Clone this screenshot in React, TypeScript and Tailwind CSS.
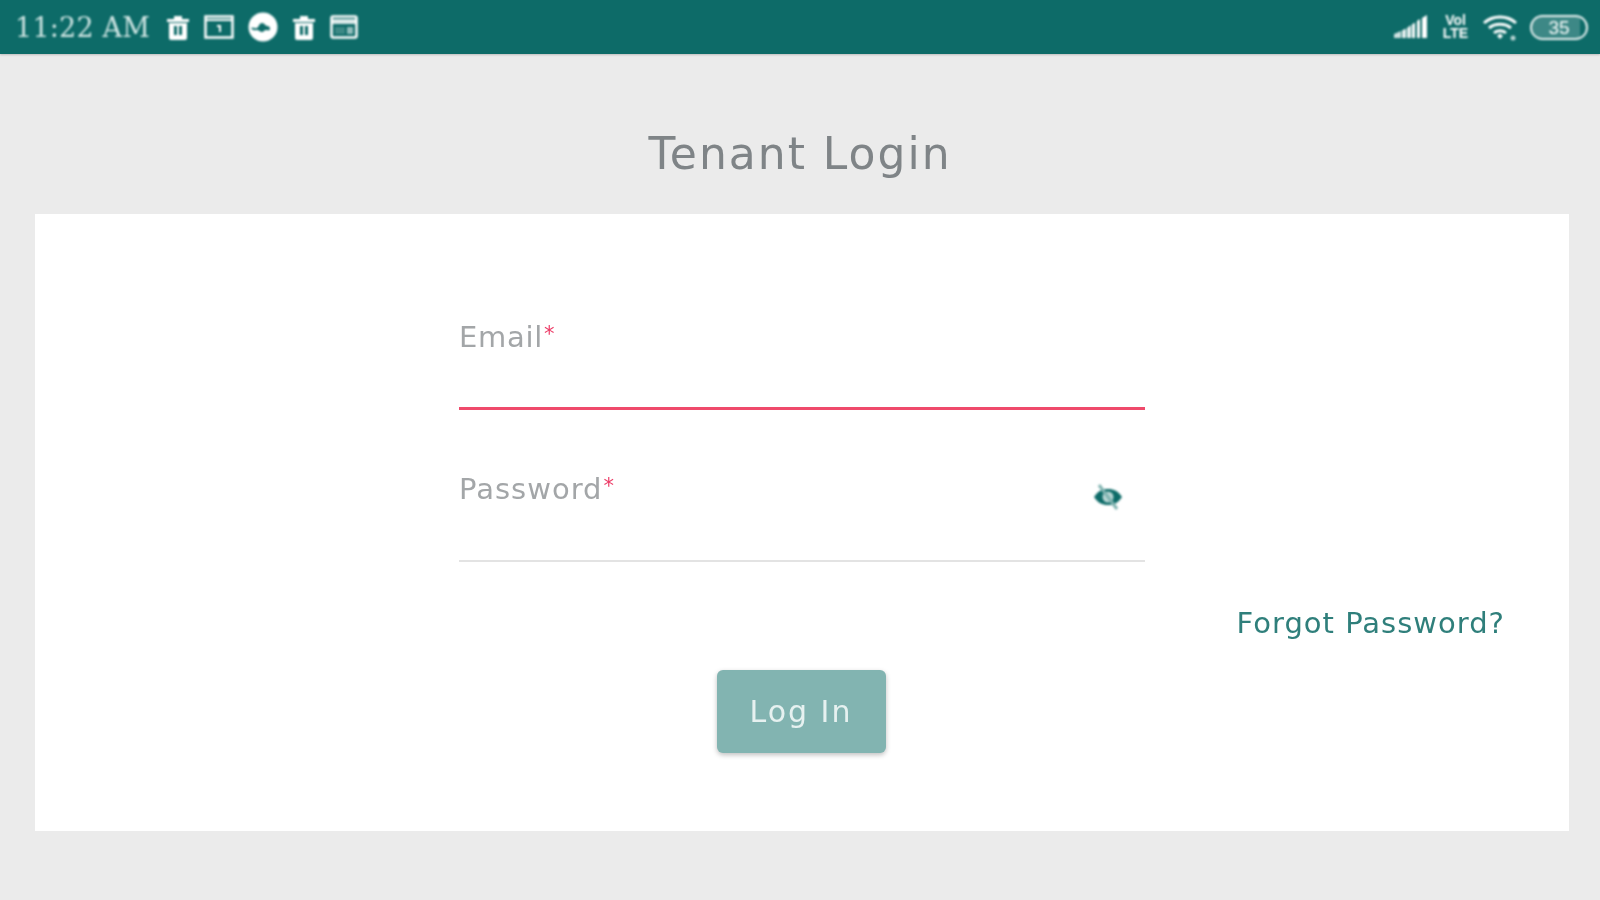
const sans = "font-['DejaVu_Sans','Inter',sans-serif]";

function TrashIcon() {
  return (
    <svg width="24" height="26" viewBox="0 0 24 26" fill="white">
      <path d="M1 5h22v3H1zM8 2h8v3H8z" />
      <path fillRule="evenodd" d="M3 9h18v15a2 2 0 0 1-2 2H5a2 2 0 0 1-2-2zM8 12v9h3v-9zM13 12v9h3v-9z" />
    </svg>
  );
}

function CalendarIcon() {
  return (
    <svg width="30" height="26" viewBox="0 0 30 26" fill="none">
      <rect x="1.5" y="2.5" width="27" height="21" stroke="white" strokeWidth="2.5" />
      <path d="M1.5 6h27" stroke="white" strokeWidth="2" />
      <path d="M13 11h4v7h-2v-5h-2z" fill="white" />
    </svg>
  );
}

function KeyIcon() {
  return (
    <svg width="30" height="30" viewBox="0 0 30 30">
      <circle cx="15" cy="15" r="14.5" fill="white" />
      <path d="M3 16c3-1 4 1 6 0s2-5 5-5 3 3 5 3 3 1 3 3-2 1-4 1-2 2-4 2-3-2-5-2-4 1-6-2z" fill="#0d6b68" />
    </svg>
  );
}

function WindowIcon() {
  return (
    <svg width="28" height="26" viewBox="0 0 28 26">
      <rect x="1.5" y="2.5" width="25" height="21" rx="1.5" fill="none" stroke="white" strokeWidth="2.5" />
      <path d="M1.5 5h25v5h-25z" fill="white" fillOpacity="0.85" />
      <path d="M5 13h10v7H5z" fill="#3c8885" />
      <path d="M17 13h6v7h-6z" fill="white" fillOpacity="0.55" />
    </svg>
  );
}

function SignalIcon() {
  return (
    <svg width="36" height="26" viewBox="0 0 36 26" fill="white">
      <path d="M1 20l7-3v7H1z" fillOpacity="0.8" />
      <path d="M9 16.500l4-2V24H9zM14 14l4-3v13h-4z" fillOpacity="0.9" />
      <path d="M19 10.500l3-2V24h-3zM24 7l3-2v19h-3zM29 4l5-3v23h-5z" />
    </svg>
  );
}

function VolteIcon() {
  return (
    <div className="flex w-[29px] flex-col items-center font-['Liberation_Sans',sans-serif] text-[14px] font-bold leading-[13px] text-white">
      <span>Vol</span>
      <span>LTE</span>
    </div>
  );
}

function WifiIcon() {
  return (
    <svg width="36" height="28" viewBox="0 0 36 28" fill="none" stroke="white" strokeWidth="3">
      <path d="M2 10c9-8 23-8 32 0M7 15c6-5 16-5 22 0M12 20c3-3 9-3 12 0" />
      <path d="M15 23l3-2.500 3 2.500-3 3z" fill="white" stroke="none" />
      <circle cx="31" cy="25" r="2.500" fill="white" fillOpacity="0.7" stroke="none" />
    </svg>
  );
}

function Battery() {
  return (
    <div className="flex h-[25px] w-[58px] items-center overflow-hidden rounded-full border-2 border-white/90 font-['Liberation_Sans',sans-serif] text-[19px] leading-none text-white">
      <div className="flex h-full w-[48px] items-center justify-center rounded-l-full bg-white/20 pl-[6px]">35</div>
    </div>
  );
}

function StatusBar() {
  return (
    <div className="flex h-[54px] items-center justify-between bg-[#0d6b68] pl-[15px] pr-[12px] shadow-[0_1px_2px_rgba(0,0,0,0.2)]">
      <div className="flex items-center blur-[0.9px]">
        <span className="mr-[15px] w-[136px] font-['DejaVu_Serif',serif] text-[27px] leading-none tracking-[0.2px] whitespace-nowrap text-[#cfe5e3]">
          11:22 AM
        </span>
        <div className="flex items-center gap-[14px]">
          <TrashIcon />
          <CalendarIcon />
          <KeyIcon />
          <TrashIcon />
          <WindowIcon />
        </div>
      </div>
      <div className="flex items-center gap-[12px] blur-[0.9px]">
        <SignalIcon />
        <VolteIcon />
        <WifiIcon />
        <Battery />
      </div>
    </div>
  );
}

function EyeOffIcon() {
  return (
    <svg width="30" height="26" viewBox="0 0 30 26" fill="none" className="absolute right-[22px] top-[14px] blur-[0.8px]">
      <path d="M1 13c4-6 8-8 14-8s10 2 14 8c-4 6-8 8-14 8S5 19 1 13z" fill="#0d6b68" />
      <circle cx="15" cy="13" r="5.500" fill="#b9d6d4" />
      <path d="M6 1l18 24" stroke="#7fb3b0" strokeWidth="3" />
    </svg>
  );
}

function Field({ label, labelClass, active, children }: { label: string; labelClass: string; active?: boolean; children?: React.ReactNode }) {
  return (
    <div className={`relative flex h-[92px] flex-col justify-between pt-[2px] ${active ? "border-b-[3px] border-[#ef4a6b]" : "border-b-2 border-[#e3e3e3]"}`}>
      <span className={`block text-[29px] leading-[34px] text-[#a3a6a8] blur-[0.7px] ${labelClass}`}>
        {label}
        <span className="ml-[1px] align-[6px] text-[21px] leading-none text-[#ec3b66]">*</span>
      </span>
      {children}
    </div>
  );
}

export default function App() {
  return (
    <div className={`flex h-[900px] w-[1600px] flex-col overflow-hidden bg-[#ebebeb] ${sans}`}>
      <StatusBar />
      <h1 className="flex h-[160px] items-center justify-center pt-[40px] text-[44px] font-normal tracking-[2px] text-[#7f8487] blur-[0.7px]">
        Tenant Login
      </h1>
      <div className="ml-[35px] mr-[31px] flex h-[617px] flex-col bg-white">
        <div className="mx-auto mt-[104px] flex w-[686px] flex-col gap-[60px]">
          <Field label="Email" labelClass="tracking-[0.7px]" active />
          <Field label="Password" labelClass="tracking-[1px]">
            <EyeOffIcon />
          </Field>
        </div>
        <a className="mr-[64px] mt-[44px] block self-end text-[29px] leading-[34px] tracking-[1px] text-[#2f7f7b] blur-[0.7px]">
          Forgot Password?
        </a>
        <button className="mx-auto mt-[30px] h-[83px] w-[169px] -translate-x-[1px] rounded-[6px] bg-[#82b4b1] text-[30px] tracking-[2px] text-[#e6f1f0] shadow-[0_2px_5px_rgba(0,0,0,0.25)]">
          <span className="block blur-[0.7px]">Log In</span>
        </button>
      </div>
    </div>
  );
}
